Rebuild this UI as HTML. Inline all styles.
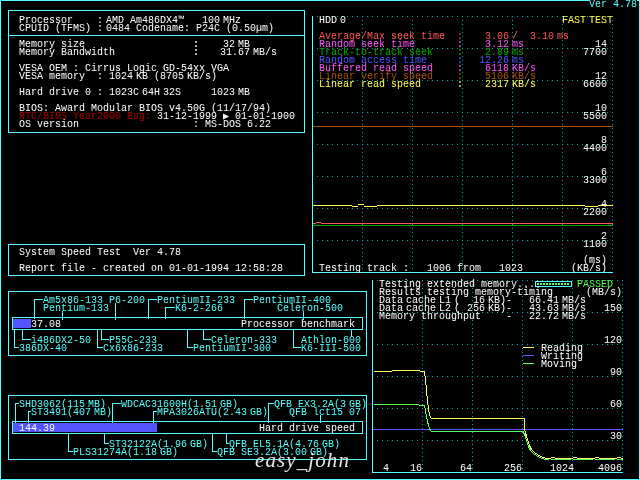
<!DOCTYPE html>
<html lang="en">
<head>
<meta charset="utf-8">
<title>System Speed Test 4.78</title>
<style>
html,body{margin:0;padding:0;background:#000;}
body{width:640px;height:480px;overflow:hidden;position:relative;}
#scr{position:absolute;left:0;top:0;width:640px;height:480px;background:#000;overflow:hidden;}
#g{position:absolute;left:0;top:0;}
#txt{position:absolute;left:0;top:0;width:640px;height:480px;will-change:transform;}
#txt span{position:absolute;white-space:pre;font-family:"Liberation Mono","DejaVu Sans Mono",monospace;font-size:10px;line-height:8px;height:8px;letter-spacing:0;margin-top:1px;}
.c0{color:#ffffff}.c1{color:#aa0000}.c2{color:#55ffff}.c3{color:#ffff55}.c4{color:#ff5555}.c5{color:#ff55ff}.c6{color:#00aa00}.c7{color:#5555ff}.c8{color:#aa5500}.c9{color:#55ff55}
#txt span.b{font-weight:bold}
#wm{position:absolute;left:255px;top:446px;color:#e8e8e8;font-family:"Liberation Serif",serif;font-style:italic;font-size:21px;line-height:28px;white-space:pre;letter-spacing:1.1px;}
</style>
</head>
<body>
<div id="scr">
<svg id="g" width="640" height="480" viewBox="0 0 640 480">
<g stroke="#00aaaa" stroke-width="1" fill="none" shape-rendering="crispEdges">
<g stroke-dasharray="1 4"><path d="M317 16.5H613"/><path d="M317 48.5H613"/><path d="M317 80.5H613"/><path d="M317 112.5H613"/><path d="M317 144.5H613"/><path d="M317 176.5H613"/><path d="M317 208.5H613"/><path d="M317 240.5H613"/><path d="M377 280.5H623"/><path d="M377 312.5H623"/><path d="M377 344.5H623"/><path d="M377 376.5H623"/><path d="M377 408.5H623"/><path d="M377 440.5H623"/></g>
<g stroke-dasharray="1 3"><path d="M362.5 16V272"/><path d="M412.5 16V272"/><path d="M462.5 16V272"/><path d="M512.5 16V272"/><path d="M562.5 16V272"/><path d="M612.5 16V272"/><path d="M422.5 280V472"/><path d="M472.5 280V472"/><path d="M522.5 280V472"/><path d="M572.5 280V472"/><path d="M622.5 280V472"/></g>
</g>
<g shape-rendering="crispEdges">
<rect x="0" y="0" width="589" height="1" fill="#55ffff"/><rect x="637" y="0" width="3" height="1" fill="#55ffff"/><rect x="0" y="0" width="1" height="480" fill="#55ffff"/><rect x="639" y="0" width="1" height="480" fill="#55ffff"/><rect x="0" y="479" width="640" height="1" fill="#55ffff"/><rect x="8" y="10" width="297" height="1" fill="#55ffff"/><rect x="8" y="132" width="297" height="1" fill="#55ffff"/><rect x="8" y="10" width="1" height="123" fill="#55ffff"/><rect x="304" y="10" width="1" height="123" fill="#55ffff"/><rect x="8" y="35" width="297" height="1" fill="#55ffff"/><rect x="8" y="244" width="297" height="1" fill="#55ffff"/><rect x="8" y="275" width="297" height="1" fill="#55ffff"/><rect x="8" y="244" width="1" height="32" fill="#55ffff"/><rect x="304" y="244" width="1" height="32" fill="#55ffff"/><rect x="312" y="16" width="1" height="257" fill="#55ffff"/><rect x="312" y="272" width="301" height="1" fill="#55ffff"/><rect x="372" y="280" width="1" height="193" fill="#55ffff"/><rect x="372" y="472" width="251" height="1" fill="#55ffff"/><rect x="8" y="291" width="359" height="1" fill="#55ffff"/><rect x="8" y="355" width="359" height="1" fill="#55ffff"/><rect x="8" y="291" width="1" height="65" fill="#55ffff"/><rect x="366" y="291" width="1" height="65" fill="#55ffff"/><rect x="12" y="317" width="351" height="1" fill="#55ffff"/><rect x="12" y="329" width="351" height="1" fill="#55ffff"/><rect x="12" y="317" width="1" height="13" fill="#55ffff"/><rect x="362" y="317" width="1" height="13" fill="#55ffff"/><rect x="13" y="319" width="18" height="9" fill="#5555ff"/><rect x="34" y="299" width="9" height="1" fill="#55ffff"/><rect x="34" y="299" width="1" height="20" fill="#55ffff"/><rect x="62" y="311" width="1" height="9" fill="#55ffff"/><rect x="115" y="303" width="1" height="17" fill="#55ffff"/><rect x="148" y="299" width="9" height="1" fill="#55ffff"/><rect x="148" y="299" width="1" height="20" fill="#55ffff"/><rect x="165" y="307" width="10" height="1" fill="#55ffff"/><rect x="165" y="307" width="1" height="12" fill="#55ffff"/><rect x="244" y="299" width="9" height="1" fill="#55ffff"/><rect x="244" y="299" width="1" height="20" fill="#55ffff"/><rect x="303" y="311" width="1" height="9" fill="#55ffff"/><rect x="22" y="329" width="1" height="11" fill="#55ffff"/><rect x="22" y="339" width="9" height="1" fill="#55ffff"/><rect x="14" y="329" width="1" height="19" fill="#55ffff"/><rect x="14" y="347" width="5" height="1" fill="#55ffff"/><rect x="101" y="329" width="1" height="11" fill="#55ffff"/><rect x="101" y="339" width="8" height="1" fill="#55ffff"/><rect x="97" y="329" width="1" height="19" fill="#55ffff"/><rect x="97" y="347" width="6" height="1" fill="#55ffff"/><rect x="203" y="329" width="1" height="11" fill="#55ffff"/><rect x="203" y="339" width="8" height="1" fill="#55ffff"/><rect x="187" y="329" width="1" height="19" fill="#55ffff"/><rect x="187" y="347" width="6" height="1" fill="#55ffff"/><rect x="351" y="329" width="1" height="8" fill="#55ffff"/><rect x="293" y="329" width="1" height="19" fill="#55ffff"/><rect x="293" y="347" width="8" height="1" fill="#55ffff"/><rect x="8" y="395" width="359" height="1" fill="#55ffff"/><rect x="8" y="459" width="359" height="1" fill="#55ffff"/><rect x="8" y="395" width="1" height="65" fill="#55ffff"/><rect x="366" y="395" width="1" height="65" fill="#55ffff"/><rect x="12" y="421" width="351" height="1" fill="#55ffff"/><rect x="12" y="433" width="351" height="1" fill="#55ffff"/><rect x="12" y="421" width="1" height="13" fill="#55ffff"/><rect x="362" y="421" width="1" height="13" fill="#55ffff"/><rect x="13" y="423" width="144" height="9" fill="#5555ff"/><rect x="15" y="403" width="4" height="1" fill="#55ffff"/><rect x="15" y="403" width="1" height="20" fill="#55ffff"/><rect x="28" y="411" width="3" height="1" fill="#55ffff"/><rect x="28" y="411" width="1" height="12" fill="#55ffff"/><rect x="112" y="403" width="9" height="1" fill="#55ffff"/><rect x="112" y="403" width="1" height="20" fill="#55ffff"/><rect x="153" y="411" width="4" height="1" fill="#55ffff"/><rect x="153" y="411" width="1" height="12" fill="#55ffff"/><rect x="268" y="403" width="6" height="1" fill="#55ffff"/><rect x="268" y="403" width="1" height="20" fill="#55ffff"/><rect x="320" y="415" width="1" height="8" fill="#55ffff"/><rect x="104" y="433" width="1" height="11" fill="#55ffff"/><rect x="104" y="443" width="5" height="1" fill="#55ffff"/><rect x="68" y="433" width="1" height="19" fill="#55ffff"/><rect x="68" y="451" width="5" height="1" fill="#55ffff"/><rect x="226" y="433" width="1" height="11" fill="#55ffff"/><rect x="226" y="443" width="3" height="1" fill="#55ffff"/><rect x="212" y="433" width="1" height="19" fill="#55ffff"/><rect x="212" y="451" width="5" height="1" fill="#55ffff"/><rect x="313" y="126" width="300" height="1" fill="#aa5500"/><rect x="313" y="205" width="39" height="1" fill="#ffff55"/><rect x="352" y="206" width="6" height="1" fill="#ffff55"/><rect x="358" y="204" width="6" height="1" fill="#ffff55"/><rect x="364" y="206" width="13" height="1" fill="#ffff55"/><rect x="377" y="205" width="208" height="1" fill="#ffff55"/><rect x="585" y="206" width="13" height="1" fill="#ffff55"/><rect x="598" y="205" width="15" height="1" fill="#ffff55"/><rect x="313" y="223" width="3" height="1" fill="#ff5555"/><rect x="316" y="222" width="5" height="1" fill="#ff5555"/><rect x="321" y="223" width="292" height="1" fill="#ff5555"/><rect x="313" y="225" width="300" height="1" fill="#00aa00"/><rect x="535" y="281" width="37" height="1" fill="#55ffff"/><rect x="535" y="286" width="37" height="1" fill="#55ffff"/><rect x="535" y="281" width="1" height="6" fill="#55ffff"/><rect x="571" y="281" width="1" height="6" fill="#55ffff"/><rect x="523" y="347" width="11" height="1" fill="#ffff55"/><rect x="523" y="355" width="11" height="1" fill="#5555ff"/><rect x="523" y="363" width="11" height="1" fill="#55ff55"/><rect x="373" y="429" width="250" height="1" fill="#5555ff"/>
<rect x="537" y="283" width="2" height="2" fill="#55ff55"/><rect x="540" y="283" width="2" height="2" fill="#55ff55"/><rect x="543" y="283" width="2" height="2" fill="#55ff55"/><rect x="546" y="283" width="2" height="2" fill="#55ff55"/><rect x="549" y="283" width="2" height="2" fill="#55ff55"/><rect x="552" y="283" width="2" height="2" fill="#55ff55"/><rect x="555" y="283" width="2" height="2" fill="#55ff55"/><rect x="558" y="283" width="2" height="2" fill="#55ff55"/><rect x="561" y="283" width="2" height="2" fill="#55ff55"/><rect x="564" y="283" width="2" height="2" fill="#55ff55"/><rect x="567" y="283" width="2" height="2" fill="#55ff55"/>
</g>
<path d="M373.5 405.5 L374.5 404.5 L418.5 404.5 L419.5 405.5 L424.5 405.5 L425.5 410.5 L426.5 416.5 L427.5 421.5 L428.5 425.5 L429.5 428.5 L430.5 430.5 L431.5 431.5 L523.5 431.5 L523.5 433.5 L524.5 433.5 L525.5 437.5 L526.5 440.5 L527.5 443.5 L528.5 446.5 L529.5 448.5 L530.5 450.5 L531.5 451.5 L532.5 452.5 L533.5 453.5 L534.5 454.5 L535.5 454.5 L536.5 455.5 L537.5 456.5 L538.5 456.5 L539.5 457.5 L540.5 457.5 L541.5 458.5 L542.5 458.5 L543.5 458.5 L544.5 459.5 L545.5 459.5 L546.5 459.5 L547.5 459.5 L548.5 459.5 L549.5 458.5 L550.5 458.5 L551.5 459.5 L552.5 459.5 L553.5 459.5 L554.5 459.5 L555.5 459.5 L556.5 459.5 L557.5 459.5 L558.5 459.5 L559.5 459.5 L560.5 459.5 L561.5 459.5 L562.5 459.5 L563.5 459.5 L564.5 459.5 L565.5 459.5 L566.5 459.5 L567.5 459.5 L568.5 459.5 L569.5 459.5 L570.5 459.5 L571.5 458.5 L572.5 458.5 L573.5 459.5 L574.5 459.5 L575.5 459.5 L576.5 459.5 L577.5 459.5 L578.5 459.5 L579.5 459.5 L580.5 459.5 L581.5 459.5 L582.5 459.5 L583.5 459.5 L584.5 459.5 L585.5 459.5 L586.5 459.5 L587.5 459.5 L588.5 459.5 L589.5 459.5 L590.5 459.5 L591.5 459.5 L592.5 459.5 L593.5 458.5 L594.5 458.5 L595.5 459.5 L596.5 459.5 L597.5 459.5 L598.5 459.5 L599.5 459.5 L600.5 459.5 L601.5 459.5 L602.5 459.5 L603.5 459.5 L604.5 459.5 L605.5 459.5 L606.5 459.5 L607.5 459.5 L608.5 459.5 L609.5 459.5 L610.5 459.5 L611.5 459.5 L612.5 459.5 L613.5 459.5 L614.5 459.5 L615.5 458.5 L616.5 458.5 L617.5 459.5 L618.5 459.5 L619.5 459.5 L620.5 459.5 L621.5 459.5 L622.5 459.5" fill="none" stroke="#55ff55" stroke-width="1" shape-rendering="crispEdges"/><path d="M373.5 371.5 L391.5 371.5 L392.5 370.5 L419.5 370.5 L420.5 371.5 L424.5 371.5 L425.5 379.5 L426.5 390.5 L427.5 400.5 L428.5 408.5 L429.5 414.5 L430.5 417.5 L431.5 418.5 L524.5 418.5 L524.5 430.5 L524.5 429.5 L525.5 432.5 L526.5 436.5 L527.5 439.5 L528.5 442.5 L529.5 445.5 L530.5 447.5 L531.5 449.5 L532.5 450.5 L533.5 451.5 L534.5 452.5 L535.5 453.5 L536.5 453.5 L537.5 454.5 L538.5 455.5 L539.5 455.5 L540.5 456.5 L541.5 456.5 L542.5 457.5 L543.5 457.5 L544.5 457.5 L545.5 458.5 L546.5 458.5 L547.5 458.5 L548.5 458.5 L549.5 458.5 L550.5 458.5 L551.5 457.5 L552.5 457.5 L553.5 457.5 L554.5 457.5 L555.5 458.5 L556.5 458.5 L557.5 458.5 L558.5 458.5 L559.5 458.5 L560.5 458.5 L561.5 458.5 L562.5 458.5 L563.5 458.5 L564.5 458.5 L565.5 458.5 L566.5 458.5 L567.5 458.5 L568.5 458.5 L569.5 458.5 L570.5 458.5 L571.5 458.5 L572.5 458.5 L573.5 457.5 L574.5 457.5 L575.5 457.5 L576.5 457.5 L577.5 458.5 L578.5 458.5 L579.5 458.5 L580.5 458.5 L581.5 458.5 L582.5 458.5 L583.5 458.5 L584.5 458.5 L585.5 458.5 L586.5 458.5 L587.5 458.5 L588.5 458.5 L589.5 458.5 L590.5 458.5 L591.5 458.5 L592.5 458.5 L593.5 458.5 L594.5 458.5 L595.5 457.5 L596.5 457.5 L597.5 457.5 L598.5 457.5 L599.5 458.5 L600.5 458.5 L601.5 458.5 L602.5 458.5 L603.5 458.5 L604.5 458.5 L605.5 458.5 L606.5 458.5 L607.5 458.5 L608.5 458.5 L609.5 458.5 L610.5 458.5 L611.5 458.5 L612.5 458.5 L613.5 458.5 L614.5 458.5 L615.5 458.5 L616.5 458.5 L617.5 457.5 L618.5 457.5 L619.5 457.5 L620.5 457.5 L621.5 458.5 L622.5 458.5" fill="none" stroke="#ffff55" stroke-width="1" shape-rendering="crispEdges"/>
</svg>
<div id="txt">
<span class="c0" style="left:19px;top:16px">Processor    :</span>
<span class="c0" style="left:106px;top:16px">AMD Am486DX4™</span>
<span class="c0" style="left:202px;top:16px">100</span>
<span class="c0" style="left:223px;top:16px">MHz</span>
<span class="c0" style="left:19px;top:24px">CPUID (TFMS) :</span>
<span class="c0" style="left:106px;top:24px">0484 Codename: P24C (0.50µm)</span>
<span class="c0" style="left:19px;top:40px">Memory size</span>
<span class="c0 b" style="left:193px;top:40px">:</span>
<span class="c0" style="left:223px;top:40px">32</span>
<span class="c0" style="left:238px;top:40px">MB</span>
<span class="c0" style="left:19px;top:48px">Memory Bandwidth</span>
<span class="c0 b" style="left:193px;top:48px">:</span>
<span class="c0" style="left:220px;top:48px">31.67</span>
<span class="c0" style="left:253px;top:48px">MB/s</span>
<span class="c0" style="left:19px;top:64px">VESA OEM : Cirrus Logic GD-54xx VGA</span>
<span class="c0" style="left:19px;top:72px">VESA memory  : 1024</span>
<span class="c0" style="left:136px;top:72px">KB (8705</span>
<span class="c0" style="left:187px;top:72px">KB/s)</span>
<span class="c0" style="left:19px;top:88px">Hard drive 0 : 1023C</span>
<span class="c0" style="left:142px;top:88px">64H</span>
<span class="c0" style="left:163px;top:88px">32S</span>
<span class="c0" style="left:211px;top:88px">1023</span>
<span class="c0" style="left:238px;top:88px">MB</span>
<span class="c0" style="left:19px;top:104px">BIOS: Award Modular BIOS v4.50G (11/17/94)</span>
<span class="c1" style="left:19px;top:112px">RTC/BIOS Year2000 Bug:</span>
<span class="c0" style="left:157px;top:112px">31-12-1999 ▶ 01-01-1900</span>
<span class="c0" style="left:19px;top:120px">OS version</span>
<span class="c0" style="left:193px;top:120px">: MS-DOS 6.22</span>
<span class="c0" style="left:19px;top:248px">System Speed Test  Ver 4.78</span>
<span class="c0" style="left:19px;top:264px">Report file - created on 01-01-1994 12:58:28</span>
<span class="c2" style="left:589px;top:0px">Ver 4.78</span>
<span class="c0" style="left:319px;top:16px">HDD</span>
<span class="c0" style="left:340px;top:16px">0</span>
<span class="c3" style="left:562px;top:16px">FAST</span>
<span class="c3" style="left:589px;top:16px">TEST</span>
<span class="c4" style="left:319px;top:32px">Average/Max seek time  :</span>
<span class="c4" style="left:485px;top:32px">3.06</span>
<span class="c4" style="left:512px;top:32px">/</span>
<span class="c4" style="left:530px;top:32px">3.10</span>
<span class="c4" style="left:557px;top:32px">ms</span>
<span class="c5" style="left:319px;top:40px">Random seek time</span>
<span class="c5 b" style="left:457px;top:40px">:</span>
<span class="c5" style="left:485px;top:40px">3.12</span>
<span class="c5" style="left:512px;top:40px">ms</span>
<span class="c6" style="left:319px;top:48px">Track-to-track seek</span>
<span class="c6 b" style="left:457px;top:48px">:</span>
<span class="c6" style="left:485px;top:48px">2.89</span>
<span class="c6" style="left:512px;top:48px">ms</span>
<span class="c7" style="left:319px;top:56px">Random access time</span>
<span class="c7 b" style="left:457px;top:56px">:</span>
<span class="c7" style="left:479px;top:56px">12.26</span>
<span class="c7" style="left:512px;top:56px">ms</span>
<span class="c5" style="left:319px;top:64px">Buffered read speed</span>
<span class="c5 b" style="left:457px;top:64px">:</span>
<span class="c5" style="left:485px;top:64px">6118</span>
<span class="c5" style="left:512px;top:64px">KB/s</span>
<span class="c8" style="left:319px;top:72px">Linear verify speed</span>
<span class="c8 b" style="left:457px;top:72px">:</span>
<span class="c8" style="left:485px;top:72px">5106</span>
<span class="c8" style="left:512px;top:72px">KB/s</span>
<span class="c3" style="left:319px;top:80px">Linear read speed</span>
<span class="c3 b" style="left:457px;top:80px">:</span>
<span class="c3" style="left:485px;top:80px">2317</span>
<span class="c3" style="left:512px;top:80px">KB/s</span>
<span class="c0" style="left:595px;top:40px">14</span>
<span class="c0" style="left:583px;top:48px">7700</span>
<span class="c0" style="left:595px;top:72px">12</span>
<span class="c0" style="left:583px;top:80px">6600</span>
<span class="c0" style="left:595px;top:104px">10</span>
<span class="c0" style="left:583px;top:112px">5500</span>
<span class="c0" style="left:601px;top:136px">8</span>
<span class="c0" style="left:583px;top:144px">4400</span>
<span class="c0" style="left:601px;top:168px">6</span>
<span class="c0" style="left:583px;top:176px">3300</span>
<span class="c0" style="left:601px;top:200px">4</span>
<span class="c0" style="left:583px;top:208px">2200</span>
<span class="c0" style="left:601px;top:232px">2</span>
<span class="c0" style="left:583px;top:240px">1100</span>
<span class="c0" style="left:583px;top:256px">(ms)</span>
<span class="c0" style="left:571px;top:264px">(KB/s)</span>
<span class="c0" style="left:319px;top:264px">Testing track :   1006 from   1023</span>
<span class="c0" style="left:379px;top:280px">Testing extended memory...</span>
<span class="c9" style="left:577px;top:280px">PASSED</span>
<span class="c0" style="left:379px;top:288px">Results testing memory-timing</span>
<span class="c0" style="left:586px;top:288px">(MB/s)</span>
<span class="c0" style="left:379px;top:296px">Data</span>
<span class="c0" style="left:406px;top:296px">cache</span>
<span class="c0" style="left:439px;top:296px">L1</span>
<span class="c0" style="left:454px;top:296px">(</span>
<span class="c0" style="left:473px;top:296px">16</span>
<span class="c0" style="left:488px;top:296px">KB)-</span>
<span class="c0" style="left:529px;top:296px">66.41</span>
<span class="c0" style="left:562px;top:296px">MB/s</span>
<span class="c0" style="left:379px;top:304px">Data</span>
<span class="c0" style="left:406px;top:304px">cache</span>
<span class="c0" style="left:439px;top:304px">L2</span>
<span class="c0" style="left:454px;top:304px">(</span>
<span class="c0" style="left:467px;top:304px">256</span>
<span class="c0" style="left:488px;top:304px">KB)-</span>
<span class="c0" style="left:529px;top:304px">43.63</span>
<span class="c0" style="left:562px;top:304px">MB/s</span>
<span class="c0" style="left:604px;top:304px">150</span>
<span class="c0" style="left:379px;top:312px">Memory throughput</span>
<span class="c0" style="left:506px;top:312px">-</span>
<span class="c0" style="left:529px;top:312px">22.72</span>
<span class="c0" style="left:562px;top:312px">MB/s</span>
<span class="c0" style="left:604px;top:336px">120</span>
<span class="c0" style="left:610px;top:368px">90</span>
<span class="c0" style="left:610px;top:400px">60</span>
<span class="c0" style="left:610px;top:432px">30</span>
<span class="c0" style="left:541px;top:344px">Reading</span>
<span class="c0" style="left:541px;top:352px">Writing</span>
<span class="c0" style="left:541px;top:360px">Moving</span>
<span class="c0" style="left:383px;top:464px">4</span>
<span class="c0" style="left:410px;top:464px">16</span>
<span class="c0" style="left:460px;top:464px">64</span>
<span class="c0" style="left:504px;top:464px">256</span>
<span class="c0" style="left:550px;top:464px">1024</span>
<span class="c0" style="left:598px;top:464px">4096</span>
<span class="c2" style="left:43px;top:296px">Am5x86-133 P6-200</span>
<span class="c2" style="left:157px;top:296px">PentiumII-233</span>
<span class="c2" style="left:253px;top:296px">PentiumII-400</span>
<span class="c2" style="left:43px;top:304px">Pentium-133</span>
<span class="c2" style="left:175px;top:304px">K6-2-266</span>
<span class="c2" style="left:277px;top:304px">Celeron-500</span>
<span class="c0" style="left:31px;top:320px">37.08</span>
<span class="c0" style="left:241px;top:320px">Processor benchmark</span>
<span class="c2" style="left:31px;top:336px">i486DX2-50</span>
<span class="c2" style="left:109px;top:336px">P55C-233</span>
<span class="c2" style="left:211px;top:336px">Celeron-333</span>
<span class="c2" style="left:301px;top:336px">Athlon-600</span>
<span class="c2" style="left:19px;top:344px">386DX-40</span>
<span class="c2" style="left:103px;top:344px">Cx6x86-233</span>
<span class="c2" style="left:193px;top:344px">PentiumII-300</span>
<span class="c2" style="left:301px;top:344px">K6-III-500</span>
<span class="c2" style="left:19px;top:400px">SHD3062(115</span>
<span class="c2" style="left:88px;top:400px">MB)</span>
<span class="c2" style="left:121px;top:400px">WDCAC31600H(1.51</span>
<span class="c2" style="left:220px;top:400px">GB)</span>
<span class="c2" style="left:274px;top:400px">QFB EX3.2A(3</span>
<span class="c2" style="left:349px;top:400px">GB)</span>
<span class="c2" style="left:31px;top:408px">ST3491(407</span>
<span class="c2" style="left:94px;top:408px">MB)</span>
<span class="c2" style="left:157px;top:408px">MPA3026ATU(2.43</span>
<span class="c2" style="left:250px;top:408px">GB)</span>
<span class="c2" style="left:289px;top:408px">QFB lct15 07</span>
<span class="c0" style="left:19px;top:424px">144.39</span>
<span class="c0" style="left:259px;top:424px">Hard drive speed</span>
<span class="c2" style="left:109px;top:440px">ST32122A(1.96</span>
<span class="c2" style="left:190px;top:440px">GB)</span>
<span class="c2" style="left:229px;top:440px">QFB EL5.1A(4.76</span>
<span class="c2" style="left:322px;top:440px">GB)</span>
<span class="c2" style="left:73px;top:448px">PLS31274A(1.18</span>
<span class="c2" style="left:160px;top:448px">GB)</span>
<span class="c2" style="left:217px;top:448px">QFB SE3.2A(3.00</span>
<span class="c2" style="left:310px;top:448px">GB)</span>
</div>
<div id="wm">easy_john</div>
</div>
</body>
</html>
